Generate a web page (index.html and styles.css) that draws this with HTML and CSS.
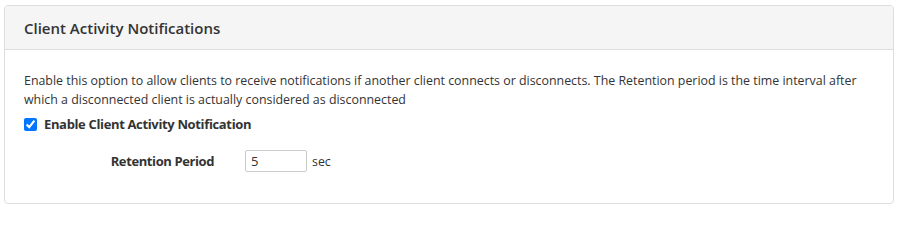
FILE: index.html
```html
<!DOCTYPE html>
<html>
<head>
<meta charset="utf-8">
<link rel="stylesheet" href="styles.css">
</head>
<body>
<div class="panel">
  <div class="panel-heading">Client Activity Notifications</div>
  <div class="panel-body">
    <p class="desc">Enable this option to allow clients to receive notifications if another client connects or disconnects. The Retention period is the time interval after which a disconnected client is actually considered as disconnected</p>
    <label class="check-row">
      <input type="checkbox" class="checkbox" checked>
      <span class="check-label">Enable Client Activity Notification</span>
    </label>
    <div class="field-row">
      <span class="field-label">Retention Period</span>
      <input type="text" class="input" value="5">
      <span class="unit">sec</span>
    </div>
  </div>
</div>
</body>
</html>
```
FILE: styles.css
```css
html, body {
  margin: 0;
  padding: 0;
  background: #fff;
}
body {
  padding: 5px 4px 0 4px;
  font-family: "Open Sans", "Noto Sans", sans-serif;
  color: #333;
}
.panel {
  width: 890px;
  height: 199px;
  box-sizing: border-box;
  border: 1px solid #ddd;
  border-radius: 4px;
  overflow: hidden;
}
.panel-heading {
  height: 44px;
  box-sizing: border-box;
  background: #f5f5f5;
  border-bottom: 1px solid #ddd;
  padding: 0 19px;
  display: flex;
  align-items: center;
  font-size: 15px;
  font-weight: 600;
  color: #333;
}
.panel-body {
  padding: 21px 19px 0 19px;
}
.desc {
  margin: 0;
  font-size: 12.4px;
  line-height: 19px;
}
.check-row {
  display: flex;
  align-items: center;
  margin-top: 7px;
  height: 16px;
}
.checkbox {
  width: 13px;
  height: 13px;
  margin: 0;
  accent-color: #0075ff;
}
.check-label {
  margin-left: 7px;
  font-size: 13px;
  font-weight: 700;
  letter-spacing: -0.35px;
}
.field-row {
  display: flex;
  align-items: center;
  margin-top: 18px;
}
.field-label {
  width: 190px;
  text-align: right;
  font-size: 13px;
  font-weight: 700;
  letter-spacing: -0.4px;
}
.input {
  margin: 0 0 0 31px;
  width: 62px;
  height: 22px;
  box-sizing: border-box;
  border: 1px solid #ccc;
  border-radius: 2px;
  padding: 0 5px;
  font-family: "Open Sans", "Noto Sans", sans-serif;
  font-size: 13px;
  color: #333;
  outline: none;
}
.unit {
  margin-left: 5px;
  font-size: 12.4px;
}
```
